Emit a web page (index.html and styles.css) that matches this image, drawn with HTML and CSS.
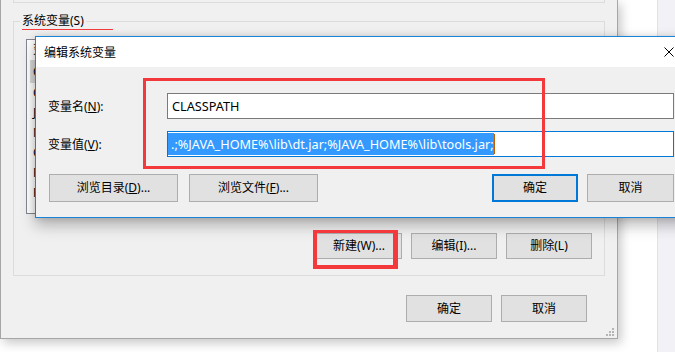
FILE: index.html
```html
<!DOCTYPE html>
<html lang="zh-CN">
<head>
<meta charset="UTF-8" />
<meta name="viewport" content="width=device-width, initial-scale=1.0" />
<title>编辑系统变量</title>
<link rel="stylesheet" href="styles.css">
</head>
<body>
<div class="screen">
     <!-- 环境变量 window, behind -->
     <div class="back-win">
          <div class="prev-group"></div>
          <fieldset class="group">
               <legend>系统变量(S)</legend>
               <div class="var-list">
                    <div class="list-row">变量</div>
                    <div class="list-row selected">CLASSPATH</div>
                    <div class="list-row">ComSpec</div>
                    <div class="list-row">JAVA_HOME</div>
                    <div class="list-row">NUMBER_OF_PROCESSORS</div>
                    <div class="list-row">OS</div>
                    <div class="list-row">Path</div>
                    <div class="list-row">PATHEXT</div>
               </div>
               <div class="group-btns">
                    <button class="btn">新建(W)...</button>
                    <button class="btn">编辑(I)...</button>
                    <button class="btn">删除(L)</button>
               </div>
          </fieldset>
          <div class="win-btns">
               <button class="btn tall">确定</button>
               <button class="btn tall">取消</button>
          </div>
          <svg class="grip" width="9" height="9" viewBox="0 0 9 9">
               <rect x="7" y="1" width="2" height="2" fill="#b5b5b5" />
               <rect x="4" y="4" width="2" height="2" fill="#b5b5b5" />
               <rect x="7" y="4" width="2" height="2" fill="#b5b5b5" />
               <rect x="1" y="7" width="2" height="2" fill="#b5b5b5" />
               <rect x="4" y="7" width="2" height="2" fill="#b5b5b5" />
               <rect x="7" y="7" width="2" height="2" fill="#b5b5b5" />
          </svg>
     </div>
     <div class="gap"></div>
     <div class="side"></div>

     <!-- 编辑系统变量 dialog -->
     <div class="dialog">
          <div class="title-bar">
               <span>编辑系统变量</span>
               <svg class="close" width="10" height="10" viewBox="0 0 10 10">
                    <path d="M0.5 0.5 L9.5 9.5 M9.5 0.5 L0.5 9.5" stroke="#000" stroke-width="1" fill="none" />
               </svg>
          </div>
          <div class="dlg-body">
               <div class="form">
                    <div class="form-row">
                         <label>变量名(<u>N</u>):</label>
                         <div class="field">CLASSPATH</div>
                    </div>
                    <div class="form-row">
                         <label>变量值(<u>V</u>):</label>
                         <div class="field focus"><span class="sel">.;%JAVA_HOME%\lib\dt.jar;%JAVA_HOME%\lib\tools.jar;</span><span class="caret"></span></div>
                    </div>
               </div>
               <div class="dlg-btns">
                    <button class="btn wide">浏览目录(<u>D</u>)...</button>
                    <button class="btn wide">浏览文件(<u>F</u>)...</button>
                    <span class="spacer"></span>
                    <button class="btn default">确定</button>
                    <button class="btn">取消</button>
               </div>
          </div>
     </div>

     <!-- red annotation marks -->
     <div class="mark mark-legend"></div>
     <div class="mark mark-fields"></div>
     <div class="mark mark-new"></div>
</div>
</body>
</html>
```

FILE: styles.css
```css
* {
     padding: 0;
     margin: 0;
     box-sizing: border-box;
}
body {
     background-color: #fff;
     font-family: "Noto Sans", "Noto Sans CJK SC", sans-serif;
     font-size: 12px;
     color: #000;
     overflow: hidden;
}
.screen {
     position: relative;
     width: 675px;
     height: 352px;
     display: flex;
     overflow: hidden;
}

/* back window */
.back-win {
     position: relative;
     flex: none;
     width: 618px;
     height: 339px;
     background-color: #f0f0f0;
     border: 1px solid #a6a6a6;
     border-top: none;
     padding: 0 12px;
     box-shadow: 3px 4px 10px rgba(0, 0, 0, 0.22);
}
.prev-group {
     height: 3px;
     border: 1px solid #dcdcdc;
     border-top: none;
}
.group {
     margin-top: 10px;
     border: 1px solid #dcdcdc;
     padding: 10px 12px 16px;
}
.group legend {
     margin-left: -6px;
     padding: 0 2px;
     line-height: 16px;
}
.var-list {
     height: 175px;
     border: 1px solid #828790;
     background-color: #fff;
     overflow: hidden;
}
.list-row {
     height: 20px;
     line-height: 20px;
     padding-left: 6px;
     white-space: nowrap;
}
.list-row.selected {
     background-color: #d9d9d9;
     margin-left: 3px;
     padding-left: 3px;
     height: 23px;
     line-height: 23px;
}
.group-btns {
     display: flex;
     justify-content: flex-end;
     gap: 9px;
     margin-top: 19px;
}
.win-btns {
     display: flex;
     justify-content: flex-end;
     gap: 9px;
     margin-top: 19px;
     padding-right: 18px;
}
.btn {
     width: 86px;
     height: 26px;
     background-color: #e1e1e1;
     border: 1px solid #adadad;
     font: inherit;
     color: #000;
     line-height: 22px;
}
.btn.tall {
     height: 27px;
}
.grip {
     position: absolute;
     right: 3px;
     bottom: 2px;
}
.gap {
     flex: none;
     width: 39px;
     background-color: #fff;
}
.side {
     flex: 1;
     background-color: #f1f1f6;
     border-left: 1px solid #e2e2ea;
}

/* dialog */
.dialog {
     position: absolute;
     left: 35px;
     top: 36px;
     width: 656px;
     height: 182px;
     background-color: #f0f0f0;
     border: 1px solid #1883d7;
     box-shadow: 0 7px 14px rgba(0, 0, 0, 0.28), 0 0 6px rgba(0, 0, 0, 0.12);
}
.title-bar {
     height: 30px;
     background-color: #fff;
     display: flex;
     align-items: center;
     padding-left: 8px;
}
.close {
     margin-left: auto;
     margin-right: 16px;
}
.dlg-body {
     padding: 26px 16px 15px 12px;
}
.form {
     display: grid;
     gap: 12px;
}
.form-row {
     display: flex;
     align-items: center;
     height: 26px;
}
.form-row label {
     width: 119px;
     flex: none;
}
.field {
     flex: 1;
     height: 26px;
     background-color: #fff;
     border: 1px solid #7a7a7a;
     padding-left: 4px;
     font-size: 12.7px;
     line-height: 24px;
     white-space: nowrap;
     overflow: hidden;
}
.field.focus {
     border-color: #0078d7;
     padding: 1px 0 0 0;
     line-height: 22px;
}
.sel {
     display: inline-block;
     vertical-align: top;
     background-color: #3399ff;
     color: #fff;
     padding-left: 3px;
     height: 22px;
}
.caret {
     display: inline-block;
     vertical-align: top;
     width: 1px;
     height: 20px;
     margin-top: 1px;
     background-color: #c06000;
}
.dlg-btns {
     display: flex;
     gap: 9px;
     margin-top: 17px;
}
.dlg-btns .btn {
     height: 28px;
}
.dlg-btns .wide {
     width: 129px;
}
.dlg-btns .wide:first-child {
     margin-left: 1px;
     margin-right: 2px;
}
.spacer {
     flex: 1;
}
.dlg-btns .default {
     border: 2px solid #0078d7;
}
.dlg-btns .btn:last-child {
     width: 87px;
}

/* annotation */
.mark {
     position: absolute;
     border: 3px solid #f4393c;
}
.mark-legend {
     left: 22px;
     top: 29px;
     width: 91px;
     height: 1px;
     border: none;
     background-color: #f4393c;
}
.mark-fields {
     left: 143px;
     top: 78px;
     width: 402px;
     height: 91px;
}
.mark-new {
     left: 313px;
     top: 230px;
     width: 85px;
     height: 39px;
     border-width: 3px 5px 4px 4px;
}
```
